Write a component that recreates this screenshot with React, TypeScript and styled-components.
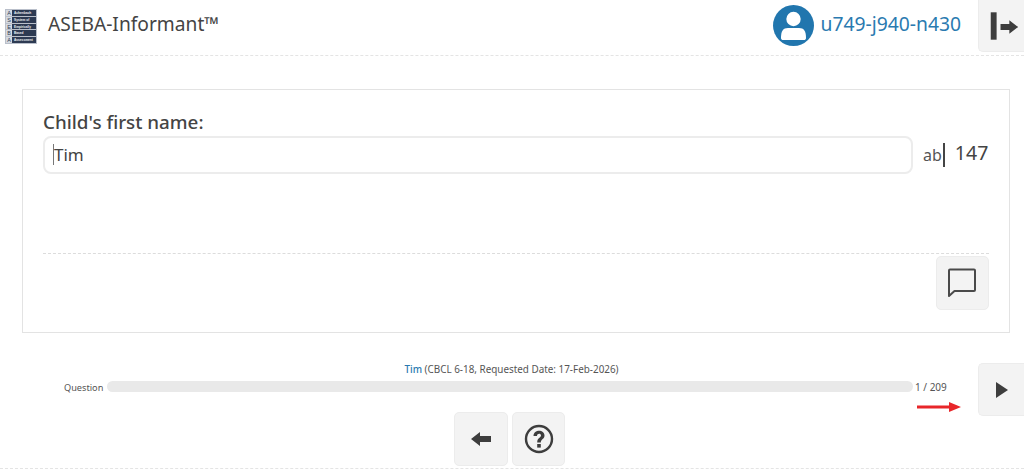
import React from "react";
import styled, { createGlobalStyle } from "styled-components";

const Global = createGlobalStyle`
  html, body { margin: 0; padding: 0; background: #fff; }
  body { font-family: "Noto Sans", "Open Sans", "Liberation Sans", sans-serif; color: #444; overflow: hidden; }
  * { box-sizing: border-box; }
`;

const Page = styled.div`width: 1024px; height: 472px; overflow: hidden;`;

const Header = styled.header`
  height: 56px;
  display: flex;
  align-items: flex-start;
  border-bottom: 1px dashed #e4e4e4;
`;
const Logo = styled.div`
  width: 32px;
  height: 35px;
  margin: 9px 0 0 5px;
  display: grid;
  grid-template-rows: repeat(5, 1fr);
  gap: 1px;
  background: #b9bfca;
  border: 1px solid #b9bfca;
`;
const LogoRow = styled.div`
  display: grid;
  grid-template-columns: 6px 1fr;
  background: #2d3a52;
  font: 700 3.2px/6px "Liberation Sans", sans-serif;
  color: #eef0f4;
  white-space: nowrap;
  overflow: hidden;
`;
const LogoLetter = styled.span`
  background: #d5d9e0;
  color: #2d3a52;
  text-align: center;
  font-size: 5.5px;
  font-weight: 400;
`;
const LogoWord = styled.span`padding-left: 2px;`;
const Title = styled.div`
  margin: 10px 0 0 11px;
  font-size: 19.2px;
  line-height: 28px;
  color: #444;
  flex: 1;
`;
const User = styled.div`
  display: flex;
  align-items: center;
  gap: 7px;
  margin: 5px 17px 0 0;
  color: #2a7ab0;
  font-size: 19.3px;
  line-height: 40px;
`;
const UserName = styled.span`margin-top: -3px;`;
const IconButton = styled.button<{ $w?: number; $h?: number }>`
  width: ${p => p.$w ?? 54}px;
  height: ${p => p.$h ?? 54}px;
  padding: 0;
  flex: none;
  display: flex;
  align-items: center;
  justify-content: center;
  background: #f3f3f3;
  border: 1px solid #ececec;
  border-radius: 5px;
  color: #444;
`;
const EdgeButton = styled(IconButton)`
  border-right: 0;
  border-radius: 5px 0 0 5px;
`;
const HeaderButton = styled(EdgeButton)`
  border-top: 0;
  border-radius: 0 0 0 5px;
`;

const Panel = styled.section`
  margin: 33px 14px 0 22px;
  height: 244px;
  border: 1px solid #e3e3e3;
  padding: 21px 20px 0 20px;
`;
const Label = styled.div`
  font-size: 18.8px;
  line-height: 25px;
  font-weight: 500;
  color: #444;
  margin-top: -1px;
  margin-bottom: 1px;
`;
const Row = styled.div`
  display: flex;
  align-items: center;
  height: 38px;
`;
const InputWrap = styled.div`
  position: relative;
  width: 870px;
  height: 38px;
`;
const TextBox = styled.input`
  width: 100%;
  height: 100%;
  border: 2px solid #ececec;
  border-radius: 8px;
  padding: 0 9px 2px;
  font: inherit;
  font-size: 17px;
  color: #444;
  outline: 0;
  background: #fff;
`;
const Caret = styled.span`
  position: absolute;
  left: 10px;
  top: 8px;
  width: 1px;
  height: 21px;
  background: #777;
`;
const Counter = styled.div`
  display: flex;
  align-items: center;
  margin-left: 10px;
  font-size: 16px;
  color: #555;
`;
const CounterBar = styled.span`
  width: 2px;
  height: 24px;
  margin-left: 1px;
  background: #444;
`;
const Count = styled.span`
  margin: -6px 0 0 10px;
  font-size: 19.5px;
  color: #444;
`;
const Divider = styled.div`
  margin-top: 79px;
  border-top: 1px dashed #dcdcdc;
`;
const PanelActions = styled.div`
  display: flex;
  justify-content: flex-end;
  margin-top: 2px;
`;

const Footer = styled.footer`
  position: relative;
  margin-top: 30px;
  height: 106px;
  display: grid;
  grid-template-columns: 1fr 46px;
  grid-template-rows: 49px 55px;
  border-bottom: 1px dashed #e4e4e4;
`;
const Progress = styled.div`
  padding: 0 0 0 64px;
  display: grid;
  grid-template-columns: 43px 806px auto;
  grid-template-rows: 18px 11px;
  font-size: 10px;
  color: #555;
`;
const Caption = styled.div`
  grid-column: 2;
  text-align: center;
  line-height: 13px;
  white-space: nowrap;
  font-size: 9.9px;
  padding-left: 3px;
`;
const Name = styled.span`color: #2a7ab0; font-weight: 500;`;
const QLabel = styled.div`
  grid-row: 2;
  grid-column: 1;
  line-height: 13px;
  font-size: 9.2px;
`;
const Track = styled.div`
  grid-row: 2;
  grid-column: 2;
  background: #e9e9e9;
  border-radius: 6px;
`;
const Pos = styled.div`
  grid-row: 2;
  grid-column: 3;
  line-height: 13px;
  padding-left: 2px;
  white-space: nowrap;
`;
const NextCell = styled.div`
  grid-row: 1;
  grid-column: 2;
`;
const Actions = styled.div`
  grid-row: 2;
  grid-column: 1 / 3;
  display: flex;
  justify-content: center;
  gap: 4px;
  padding-right: 5px;
`;
const RedArrow = styled.svg`
  position: absolute;
  left: 916px;
  top: 38px;
`;

export default function App() {
  return (
    <Page>
      <Global />
      <Header>
        <Logo>
          {[["A", "Achenbach"], ["S", "System of"], ["E", "Empirically"], ["B", "Based"], ["A", "Assessment"]].map(([l, w], i) => (
            <LogoRow key={i}><LogoLetter>{l}</LogoLetter><LogoWord>{w}</LogoWord></LogoRow>
          ))}
        </Logo>
        <Title>ASEBA-Informant™</Title>
        <User>
          <svg width="41" height="41" viewBox="0 0 41 41">
            <circle cx="20.5" cy="20.5" r="20.5" fill="#2176ae" />
            <circle cx="20.5" cy="14" r="7.2" fill="#fff" />
            <path d="M8 33 C8 26 10 23 15 23 H26 C31 23 33 26 33 33 C33 34.5 32 35 31 35 H10 C9 35 8 34.5 8 33Z" fill="#fff" />
          </svg>
          <UserName>u749-j940-n430</UserName>
        </User>
        <HeaderButton $w={46} $h={52}>
          <svg width="46" height="52" viewBox="0 0 46 52">
            <rect x="12" y="12" width="6" height="28" fill="#3d3d3d" />
            <path d="M22 24 H31 V20 L40 27 L31 34 V30 H22Z" fill="#3d3d3d" />
          </svg>
        </HeaderButton>
      </Header>
      <Panel>
        <Label>Child's first name:</Label>
        <Row>
          <InputWrap>
            <TextBox readOnly value="Tim" />
            <Caret />
          </InputWrap>
          <Counter>ab<CounterBar /><Count>147</Count></Counter>
        </Row>
        <Divider />
        <PanelActions>
          <IconButton $w={53}>
            <svg width="32" height="32" viewBox="1 1 32 32">
              <path d="M3 4.5 Q3 3.5 4 3.5 H28 Q29 3.5 29 4.5 V24 Q29 25 28 25 H8.5 L3 30Z" fill="none" stroke="#4a4a4a" strokeWidth="2" strokeLinejoin="round" />
            </svg>
          </IconButton>
        </PanelActions>
      </Panel>
      <Footer>
        <Progress>
          <Caption><Name>Tim</Name> (CBCL 6-18, Requested Date: 17-Feb-2026)</Caption>
          <QLabel>Question</QLabel>
          <Track />
          <Pos>1 / 209</Pos>
        </Progress>
        <NextCell>
          <EdgeButton $w={46} $h={53}>
            <svg width="14" height="18" viewBox="0 0 14 18"><path d="M1 1 L13 9 L1 17Z" fill="#3d3d3d" /></svg>
          </EdgeButton>
        </NextCell>
        <Actions>
          <IconButton>
            <svg width="22" height="16" viewBox="0 0 22 16"><path d="M1 8 L10 1 V5 H21 V11 H10 V15Z" fill="#3d3d3d" /></svg>
          </IconButton>
          <IconButton $w={53}>
            <svg width="30" height="30" viewBox="0 0 30 30">
              <circle cx="15" cy="15" r="13" fill="none" stroke="#3d3d3d" strokeWidth="2.4" />
              <path d="M9.5 12 C9.5 5 20.5 5 20.5 11.5 C20.5 15.2 16.8 15 16.8 18.5 H13.2 C13.2 13.5 17 13.8 17 11.5 C17 9.2 13 9.2 13 12Z" fill="#3d3d3d" />
              <rect x="13.2" y="20" width="3.6" height="3.6" fill="#3d3d3d" />
            </svg>
          </IconButton>
        </Actions>
        <RedArrow width="46" height="12" viewBox="0 0 46 12">
          <path d="M1 4.5 H33 V1 L45 6 L33 11 V7.5 H1Z" fill="#e8262a" />
        </RedArrow>
      </Footer>
    </Page>
  );
}
